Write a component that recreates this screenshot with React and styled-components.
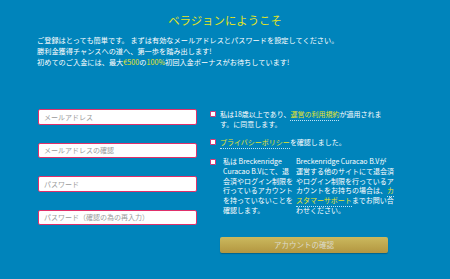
import React from "react";
import styled, { createGlobalStyle } from "styled-components";

const GlobalStyle = createGlobalStyle`
  html, body {
    margin: 0;
    padding: 0;
    background: #0084bb;
  }
  body {
    font-family: "Noto Sans CJK JP", "Noto Sans", sans-serif;
  }
`;

const Page = styled.div`
  width: 450px;
  height: 279px;
  background: #0084bb;
  box-sizing: border-box;
  padding: 12px 37px 0 37px;
  color: #fff;
  overflow: hidden;
`;

const Title = styled.h1`
  margin: 0 0 6px 0;
  font-size: 11.4px;
  font-weight: normal;
  line-height: 17px;
  color: #e3e324;
  text-align: center;
`;

const Intro = styled.p`
  margin: 0;
  font-size: 7.2px;
  line-height: 11px;
  color: #fff;
  white-space: nowrap;
`;

const Hi = styled.span`
  color: #e8e52a;
`;

const FormArea = styled.div`
  display: flex;
  gap: 13px;
  margin-top: 41px;
  margin-left: 1px;
`;

const LeftCol = styled.div`
  display: flex;
  flex-direction: column;
  gap: 18px;
  width: 159px;
`;

const Field = styled.input`
  box-sizing: border-box;
  width: 159px;
  height: 15.5px;
  border: 1px solid #e0306a;
  border-radius: 2px;
  background: #fff;
  padding: 0 5px;
  font-family: "Noto Sans CJK JP", sans-serif;
  font-size: 7px;
  outline: none;
  &::placeholder {
    color: #9a9a9a;
  }
`;

const RightCol = styled.div`
  display: flex;
  flex-direction: column;
  width: 182px;
`;

const CheckRow = styled.div`
  display: flex;
  align-items: flex-start;
  gap: ${(p) => (p.$wide ? "7px" : "4px")};
  margin-bottom: ${(p) => p.$after || 0}px;
  font-size: 7px;
  line-height: ${(p) => p.$lh || 10}px;
`;

const Box = styled.span`
  flex: none;
  box-sizing: border-box;
  width: 6px;
  height: 6px;
  margin-top: 2px;
  background: #fff;
  border: 1px solid #d43a78;
  border-radius: 1px;
`;

const Text = styled.div`
  width: ${(p) => p.$w}px;
  flex: none;
  color: #fff;
  overflow-wrap: anywhere;
`;

const Link = styled.span`
  color: #e8e52a;
  border-bottom: 1px dotted #bfe3f5;
  padding-bottom: 1px;
`;

const Columns = styled.div`
  display: flex;
  gap: 2px;
`;

const Confirm = styled.button`
  margin-top: 21px;
  margin-left: 10px;
  width: 168px;
  height: 16px;
  flex: none;
  border: none;
  border-radius: 2px;
  background: linear-gradient(#cbb95e, #b39640);
  box-shadow: 0 1px 1px rgba(0, 0, 0, 0.25);
  color: #dcdacb;
  font-family: "Noto Sans CJK JP", sans-serif;
  font-size: 7.5px;
  padding: 0;
`;

export default function App() {
  return (
    <Page>
      <GlobalStyle />
      <Title>ベラジョンにようこそ</Title>
      <Intro>ご登録はとっても簡単です。 まずは有効なメールアドレスとパスワードを設定してください。</Intro>
      <Intro>勝利金獲得チャンスへの道へ、第一歩を踏み出します!</Intro>
      <Intro>
        初めてのご入金には、最大<Hi>€500</Hi>の<Hi>100%</Hi>初回入金ボーナスがお待ちしています!
      </Intro>
      <FormArea>
        <LeftCol>
          <Field placeholder="メールアドレス" />
          <Field placeholder="メールアドレスの確認" />
          <Field placeholder="パスワード" />
          <Field placeholder="パスワード（確認の為の再入力）" />
        </LeftCol>
        <RightCol>
          <CheckRow $after={8}>
            <Box />
            <Text $w={162}>
              私は18歳以上であり、<Link>運営の利用規約</Link>が適用されます。に同意します。
            </Text>
          </CheckRow>
          <CheckRow $after={10}>
            <Box />
            <Text $w={162}>
              <Link>プライバシーポリシー</Link>を確認しました。
            </Text>
          </CheckRow>
          <CheckRow $wide $lh={9.8}>
            <Box />
            <Columns>
              <Text $w={71}>
                私は Breckenridge Curacao B.Vにて、退会済やログイン制限を行っているアカウントを持っていないことを確認します。
              </Text>
              <Text $w={98}>
                Breckenridge Curacao B.Vが
                <br />
                運営する他のサイトにて退会済やログイン制限を行っているアカウントをお持ちの場合は、<Link>カスタマーサポート</Link>までお問い合わせください。
              </Text>
            </Columns>
          </CheckRow>
          <Confirm>アカウントの確認</Confirm>
        </RightCol>
      </FormArea>
    </Page>
  );
}
